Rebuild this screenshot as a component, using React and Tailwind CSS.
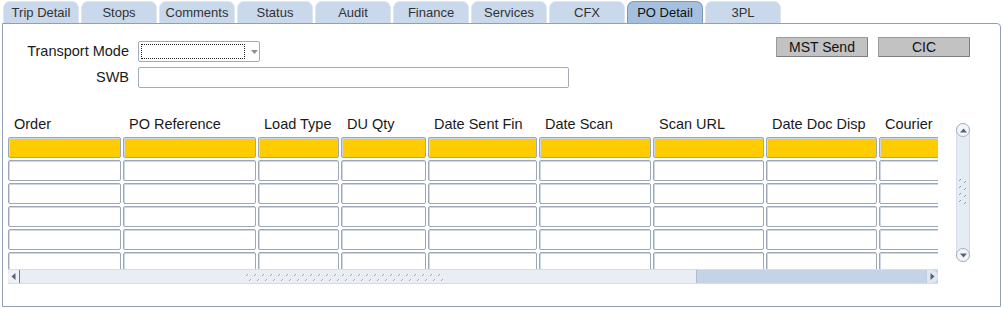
import React from "react";

const tabs = ["Trip Detail", "Stops", "Comments", "Status", "Audit", "Finance", "Services", "CFX", "PO Detail", "3PL"];

const columns = [
  { label: "Order", w: "w-[113px]" },
  { label: "PO Reference", w: "w-[133px]" },
  { label: "Load Type", w: "w-[81px]" },
  { label: "DU Qty", w: "w-[85px]" },
  { label: "Date Sent Fin", w: "w-[109px]" },
  { label: "Date Scan", w: "w-[112px]" },
  { label: "Scan URL", w: "w-[111px]" },
  { label: "Date Doc Disp", w: "w-[111px]" },
  { label: "Courier", w: "w-[111px]" },
];

function Grip({ vertical = false }) {
  // the little "////" texture found on scrollbar thumbs
  if (vertical) {
    return (
      <svg width="10" height="28" viewBox="0 0 10 28">
        {[0, 7, 14, 21].map((y) => (
          <g key={y} stroke="#8e9cb0" strokeWidth="1">
            <line x1="1" y1={y + 4} x2="3" y2={y + 2} />
            <line x1="6" y1={y + 6} x2="8" y2={y + 4} />
          </g>
        ))}
      </svg>
    );
  }
  const xs = Array.from({ length: 25 }, (_, i) => i * 8);
  return (
    <svg width="200" height="10" viewBox="0 0 200 10">
      {xs.map((x) => (
        <g key={x} stroke="#9aa7b8" strokeWidth="1">
          <line x1={x + 1} y1="4" x2={x + 3} y2="2" />
          <line x1={x + 4} y1="9" x2={x + 6} y2="7" />
        </g>
      ))}
    </svg>
  );
}

function Cell({ w, yellow }) {
  return (
    <div
      className={`${w} h-[21px] shrink-0 border border-[#9ca8b7] rounded-[2px] shadow-[inset_1px_1px_0_#cfd7e1] ${
        yellow ? "bg-[#ffcc00]" : "bg-white"
      }`}
    />
  );
}

export default function App() {
  return (
    <div className="w-[1003px] h-[309px] bg-white text-[#1a1a1a] font-['Liberation_Sans',Arial,sans-serif] text-[14.5px] overflow-hidden">
      {/* tab strip */}
      <div className="flex items-end gap-[2px] pl-[3px] h-[23px]">
        {tabs.map((t) => (
          <div
            key={t}
            className={`w-[76px] h-[22px] rounded-t-[7px] border border-b-0 text-[13px] leading-[21px] text-center ${
              t === "PO Detail"
                ? "bg-[#a4c0de] border-[#7f98b4] text-[#111]"
                : "bg-[#c9d8ea] border-[#dde6f1] text-[#333]"
            }`}
          >
            {t}
          </div>
        ))}
      </div>

      {/* panel */}
      <div className="ml-[2px] w-[999px] h-[284px] border border-[#8fa0b5] rounded-tr-[4px] bg-white">
        <div className="flex justify-between">
          <div className="pt-[17px]">
            <div className="flex items-center h-[21px]">
              <div className="w-[126px] text-right">Transport Mode</div>
              <div className="ml-[9px] w-[122px] h-[21px] border border-[#a3abb6] rounded-[2px] bg-white flex items-center">
                <div className="ml-[2px] w-[105px] h-[15px] border border-dotted border-[#222]" />
                <svg width="9" height="6" viewBox="0 0 9 6" className="ml-[5px]">
                  <path d="M1 1 L8 1 L4.5 5 Z" fill="#8a8f96" />
                </svg>
              </div>
            </div>
            <div className="flex items-center h-[21px] mt-[5px]">
              <div className="w-[126px] text-right">SWB</div>
              <div className="ml-[9px] w-[431px] h-[21px] border border-[#a3abb6] rounded-[2px] bg-white" />
            </div>
          </div>
          <div className="flex gap-[10px] pt-[13px] pr-[30px]">
            <button className="w-[92px] h-[20px] bg-[#c2c2c2] border border-[#7e7e7e] border-t-[#9c9c9c] border-l-[#9c9c9c] rounded-[1px] text-[14px] leading-[18px] text-[#111]">
              MST Send
            </button>
            <button className="w-[92px] h-[20px] bg-[#c2c2c2] border border-[#7e7e7e] border-t-[#9c9c9c] border-l-[#9c9c9c] rounded-[1px] text-[14px] leading-[18px] text-[#111]">
              CIC
            </button>
          </div>
        </div>

        {/* table */}
        <div className="flex mt-[26px] pl-[5px]">
          <div className="w-[930px] overflow-hidden">
            <div className="flex gap-[2px] h-[22px] items-center">
              {columns.map((c) => (
                <div key={c.label} className={`${c.w} shrink-0 pl-[6px] whitespace-nowrap`}>
                  {c.label}
                </div>
              ))}
            </div>
            <div className="h-[133px] overflow-hidden flex flex-col gap-[2px] pt-[1px]">
              {[0, 1, 2, 3, 4, 5].map((r) => (
                <div key={r} className="flex gap-[2px]">
                  {columns.map((c) => (
                    <Cell key={c.label} w={c.w} yellow={r === 0} />
                  ))}
                </div>
              ))}
            </div>
            {/* horizontal scrollbar */}
            <div className="flex h-[15px] bg-[#c4d4e6] border-y border-[#d4dde8]">
              <div className="w-[689px] h-full bg-[#e9eef5] flex items-center border-r border-[#b0bccb]">
                <div className="w-[12px] h-full flex items-center justify-center border-r border-[#6e7a88] rounded-l-[6px] bg-[#eef2f7]">
                  <svg width="5" height="7" viewBox="0 0 5 7">
                    <path d="M4.5 0 L0.5 3.5 L4.5 7 Z" fill="#5a6270" />
                  </svg>
                </div>
                <div className="ml-[225px]">
                  <Grip />
                </div>
              </div>
              <div className="flex-1" />
              <div className="w-[12px] h-full flex items-center justify-center rounded-r-[6px] bg-[#dfe7f1] border-l border-[#c0ccda]">
                <svg width="5" height="7" viewBox="0 0 5 7">
                  <path d="M0.5 0 L4.5 3.5 L0.5 7 Z" fill="#5a6270" />
                </svg>
              </div>
            </div>
          </div>

          {/* vertical scrollbar */}
          <div className="ml-[18px] mt-[9px] w-[14px] h-[139px] bg-[#e6ecf4] border border-[#d2dbe6] rounded-[7px] flex flex-col items-center justify-between">
            <div className="w-[14px] h-[14px] -mt-px rounded-full border border-[#a7b1bd] bg-[#f2f5f9] flex items-center justify-center">
              <svg width="7" height="5" viewBox="0 0 7 5">
                <path d="M0 4.5 L3.5 0.5 L7 4.5 Z" fill="#5a6270" />
              </svg>
            </div>
            <div className="-mt-[4px]">
              <Grip vertical />
            </div>
            <div className="w-[14px] h-[14px] -mb-px rounded-full border border-[#a7b1bd] bg-[#f2f5f9] flex items-center justify-center">
              <svg width="7" height="5" viewBox="0 0 7 5">
                <path d="M0 0.5 L7 0.5 L3.5 4.5 Z" fill="#5a6270" />
              </svg>
            </div>
          </div>
        </div>
      </div>
    </div>
  );
}
